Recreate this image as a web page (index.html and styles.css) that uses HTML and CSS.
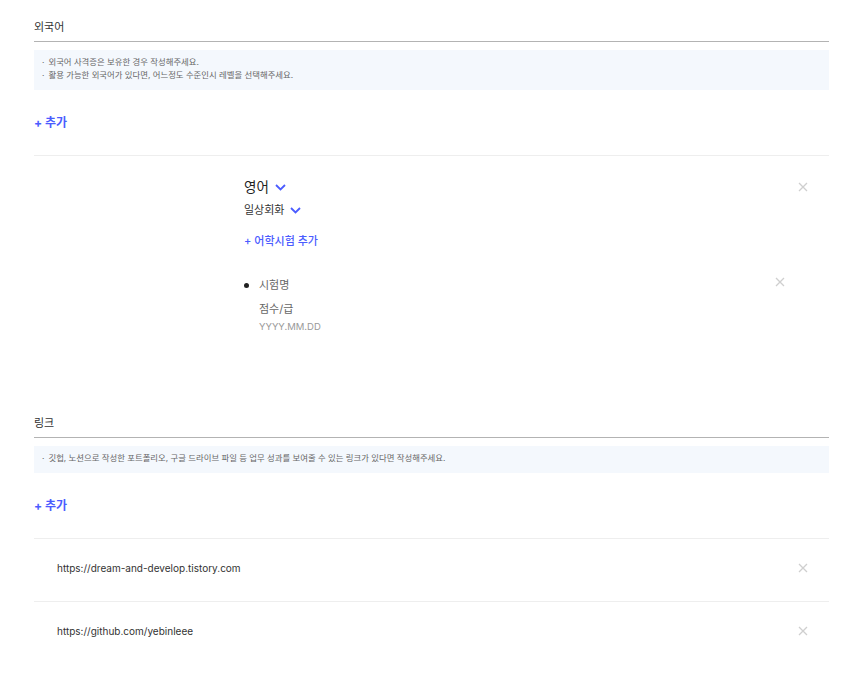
FILE: index.html
```html
<!doctype html>
<html lang="ko">
    <head>
        <meta charset="UTF-8" />
        <meta name="viewport" content="width=device-width, initial-scale=1.0" />
        <title>이력서 - 외국어 / 링크</title>
        <link rel="stylesheet" href="styles.css">
    </head>
    <body>
        <section class="resume-section">
            <div class="section-header">외국어</div>
            <div class="section-info">
                <p>외국어 사격증은 보유한 경우 작성해주세요.</p>
                <p>활용 가능한 외국어가 있다면, 어느정도 수준인시 레벨을 선택해주세요.</p>
            </div>
            <button class="add-btn">+ 추가</button>

            <div class="lang-item">
                <div class="lang-main">
                    <div class="lang-name">
                        영어
                        <svg class="chevron" width="11" height="7" viewBox="0 0 11 7"><path d="M1 1l4.5 4.5L10 1" fill="none" stroke="#4b5cff" stroke-width="1.8"/></svg>
                    </div>
                    <div class="lang-level">
                        일상회화
                        <svg class="chevron" width="11" height="7" viewBox="0 0 11 7"><path d="M1 1l4.5 4.5L10 1" fill="none" stroke="#4b5cff" stroke-width="1.8"/></svg>
                    </div>
                    <button class="add-test">+ 어학시험 추가</button>

                    <div class="test-row">
                        <span class="test-dot"></span>
                        <div class="test-fields">
                            <div class="test-name">시험명</div>
                            <div class="test-score">점수/급</div>
                            <div class="test-date">YYYY.MM.DD</div>
                        </div>
                        <button class="close-btn">
                            <svg width="10" height="10" viewBox="0 0 10 10"><path d="M1 1l8 8M9 1l-8 8" stroke="#cfcfcf" stroke-width="1.3"/></svg>
                        </button>
                    </div>
                </div>
                <button class="close-btn">
                    <svg width="10" height="10" viewBox="0 0 10 10"><path d="M1 1l8 8M9 1l-8 8" stroke="#cfcfcf" stroke-width="1.3"/></svg>
                </button>
            </div>
        </section>

        <section class="resume-section link-section">
            <div class="section-header">링크</div>
            <div class="section-info">
                <p>깃헙, 노션으로 작성한 포트폴리오, 구글 드라이브 파일 등 업무 성과를 보여줄 수 있는 링크가 있다면 작성해주세요.</p>
            </div>
            <button class="add-btn">+ 추가</button>

            <div class="link-row">
                <span class="link-url">https://dream-and-develop.tistory.com</span>
                <button class="close-btn">
                    <svg width="10" height="10" viewBox="0 0 10 10"><path d="M1 1l8 8M9 1l-8 8" stroke="#cfcfcf" stroke-width="1.3"/></svg>
                </button>
            </div>
            <div class="link-row">
                <span class="link-url">https://github.com/yebinleee</span>
                <button class="close-btn">
                    <svg width="10" height="10" viewBox="0 0 10 10"><path d="M1 1l8 8M9 1l-8 8" stroke="#cfcfcf" stroke-width="1.3"/></svg>
                </button>
            </div>
        </section>
    </body>
</html>
```

FILE: styles.css
```css
* {
    margin: 0;
    padding: 0;
    box-sizing: border-box;
}

body {
    font-family: Inter, "Noto Sans CJK KR", sans-serif;
    color: #333;
    background: #fff;
    padding: 18px 34px 0;
}

button {
    font-family: inherit;
    background: none;
    border: none;
    cursor: pointer;
}

.section-header {
    font-size: 11px;
    line-height: 18px;
    font-weight: 400;
    color: #333;
    padding-bottom: 5px;
    border-bottom: 1px solid #b3b3b3;
}

.section-info {
    margin-top: 8px;
    background: #f4f8fd;
    padding: 6px 8px 8px;
}

.section-info p {
    font-size: 8.4px;
    line-height: 13px;
    color: #666;
}

.section-info p:before {
    content: "·";
    margin-right: 4px;
}

.add-btn {
    display: block;
    margin: 24px 0 23px;
    font-size: 12px;
    line-height: 18px;
    font-weight: 700;
    color: #4b5cff;
}

.lang-item {
    display: flex;
    align-items: flex-start;
    border-top: 1px solid #eee;
    padding: 21px 21px 0 210px;
}

.lang-main {
    flex: 1;
}

.lang-name {
    font-size: 13.5px;
    line-height: 20px;
    font-weight: 400;
    color: #222;
    display: flex;
    align-items: center;
    gap: 6px;
}

.lang-level {
    margin-top: 4px;
    font-size: 11px;
    line-height: 18px;
    color: #333;
    display: flex;
    align-items: center;
    gap: 6px;
}

.add-test {
    display: block;
    margin-top: 14px;
    font-size: 11px;
    line-height: 16px;
    font-weight: 500;
    color: #4b5cff;
}

.test-row {
    display: flex;
    align-items: flex-start;
    margin: 28px 23px 0 0;
}

.test-dot {
    width: 5px;
    height: 5px;
    border-radius: 50%;
    background: #222;
    margin: 6px 10px 0 0;
}

.test-fields {
    flex: 1;
}

.test-name,
.test-score {
    font-size: 11px;
    line-height: 16px;
    color: #666;
}

.test-score {
    margin-top: 8px;
}

.test-date {
    margin-top: 3px;
    font-size: 9.5px;
    line-height: 14px;
    color: #999;
}

.close-btn {
    display: flex;
    width: 10px;
    height: 10px;
    margin-top: 5px;
}

.test-row .close-btn {
    margin: 0 -10px 0 0;
}

.link-section {
    margin-top: 80px;
}

.link-row {
    display: flex;
    align-items: center;
    justify-content: space-between;
    border-top: 1px solid #eee;
    padding: 21px 21px 25px 23px;
}

.link-url {
    font-size: 10px;
    line-height: 16px;
    color: #333;
}

.link-row .close-btn {
    margin-top: 0;
}
```
